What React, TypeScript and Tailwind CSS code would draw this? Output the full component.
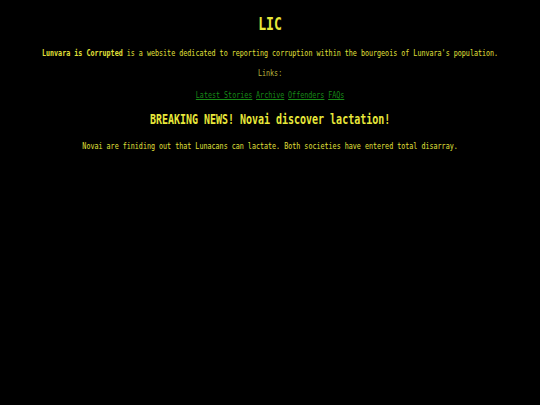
export default function App() {
  const links = ['Latest Stories', 'Archive', 'Offenders', 'FAQs'];

  return (
    <div className="min-h-screen w-full overflow-hidden bg-black">
      {/* the page font is a narrow mono; squeeze DejaVu Sans Mono to match */}
      <div className="w-[725px] origin-top-left scale-x-[0.745] text-[#e0e03a] font-['DejaVu_Sans_Mono',monospace] text-[9px] leading-[10px] flex flex-col items-center text-center">
        <h1 className="mt-[14px] text-[17.6px] leading-[20px] font-bold text-[#e8e83a]">LIC</h1>

        <p className="mt-[14px]">
          <span className="font-bold">Lunvara is Corrupted</span> is a website dedicated to reporting corruption within the bourgeois of Lunvara's population.
        </p>

        <p className="mt-[10px] text-[#b4b43c]">Links:</p>

        <nav className="mt-[12px] flex gap-[5px]">
          {links.map((link) => (
            <a key={link} href="#" className="text-[#178a17] underline">
              {link}
            </a>
          ))}
        </nav>

        <h2 className="mt-[13px] text-[13.4px] leading-[14px] font-bold text-[#e8e83a]">BREAKING NEWS! Novai discover lactation!</h2>

        <p className="mt-[14px]">
          Novai are finiding out that Lunacans can lactate. Both societies have entered total disarray.
        </p>
      </div>
    </div>
  );
}
